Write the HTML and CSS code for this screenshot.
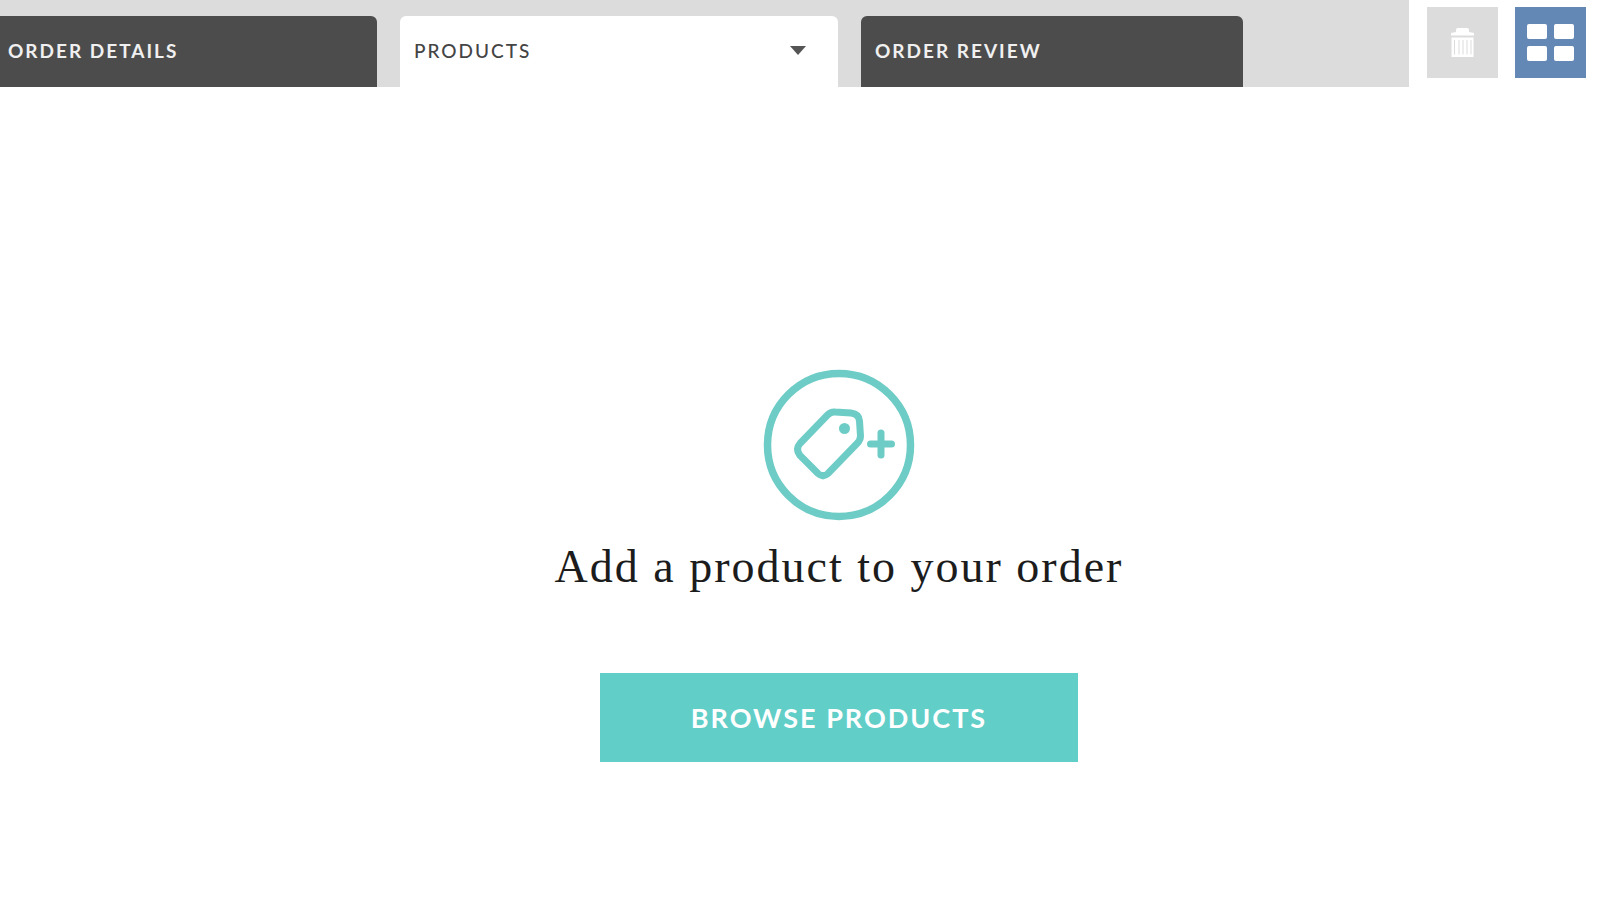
FILE: index.html
```html
<!DOCTYPE html>
<html lang="en">
<head>
  <meta charset="UTF-8" />
  <meta name="viewport" content="width=device-width, initial-scale=1.0"/>
  <title>Order - Products</title>
  <link rel="stylesheet" href="styles.css">
</head>
<body>

<header class="topbar">
  <nav class="tabs">
    <button type="button" class="tab tab-first">ORDER DETAILS</button>
    <button type="button" class="tab active" aria-haspopup="true">
      PRODUCTS
      <svg class="caret" viewBox="0 0 16 10" aria-hidden="true"><path d="M0 0h16L8 9z"/></svg>
    </button>
    <button type="button" class="tab">ORDER REVIEW</button>
  </nav>
  <div class="tools">
    <button type="button" class="tool delete-btn" aria-label="Delete">
      <svg viewBox="0 0 71 71" aria-hidden="true">
        <path d="M24 28.500v-2.500l5-1v-2.500q0-1.500 2-1.500h9q2 0 2 1.500v2.500l5 1v2.500z"/>
        <path fill-rule="evenodd" d="M24.500 30.500h22V50h-22zM27 33v14.500h1V33zM31.500 33v14.500h1V33zM35.500 33v14.500h1V33zM39.500 33v14.500h1V33zM43.500 33v14.500h1V33z"/>
      </svg>
    </button>
    <button type="button" class="tool grid-btn" aria-label="Grid view">
      <svg viewBox="0 0 71 71" aria-hidden="true">
        <rect x="12" y="17" width="20" height="15" rx="2"/>
        <rect x="39" y="17" width="20" height="15" rx="2"/>
        <rect x="12" y="39" width="20" height="15" rx="2"/>
        <rect x="39" y="39" width="20" height="15" rx="2"/>
      </svg>
    </button>
  </div>
</header>

<main class="empty">
  <svg class="tag-icon" viewBox="0 0 152 152" aria-hidden="true">
    <circle cx="76" cy="76" r="71.500" stroke-width="7.500"/>
    <path stroke-width="7" d="M72 43L88 44Q96 45 96.500 52L97.500 67Q97.500 71 94 74.500L65 104.500Q60 109 55 104.500L37 86.500Q32 80 37 74.500L64.500 46Q68 42.500 72 43Z"/>
    <path stroke-width="7" stroke-linecap="round" d="M118 64v22M107.500 75h21"/>
    <circle class="dot" cx="81.500" cy="59.500" r="5.500"/>
  </svg>
  <h1>Add a product to your order</h1>
  <button type="button" class="browse-btn">BROWSE PRODUCTS</button>
</main>

</body>
</html>
```
FILE: styles.css
```css
* {
  box-sizing: border-box;
}

body {
  font-family: Lato, 'Open Sans', sans-serif;
  background: #fff;
  margin: 0;
}

button {
  border: none;
  padding: 0;
  font-family: inherit;
  cursor: pointer;
}

.topbar {
  display: flex;
  align-items: flex-start;
}

.tabs {
  flex: 1;
  display: grid;
  grid-template-columns: 377fr 438fr 382fr 143fr;
  gap: 23px;
  padding-top: 16px;
  background: #dcdcdc;
}

.tab {
  display: flex;
  align-items: center;
  justify-content: space-between;
  height: 71px;
  padding: 0 32px 2px 14px;
  background: #4c4c4c;
  color: #f0f0f0;
  border-radius: 6px 6px 0 0;
  font-size: 19px;
  font-weight: 700;
  letter-spacing: 2px;
}

.tab-first {
  padding-left: 8px;
  border-top-left-radius: 0;
}

.tab.active {
  background: #fff;
  color: #444;
  font-weight: 500;
}

.caret {
  width: 16px;
  height: 10px;
  fill: #555;
}

.tools {
  display: flex;
  gap: 17px;
  padding: 7px 14px 0 18px;
}

.tool {
  width: 71px;
  height: 71px;
}

.tool svg {
  display: block;
  fill: #fff;
}

.delete-btn {
  background: #dcdcdc;
}

.grid-btn {
  background: #6488b6;
}

.empty {
  display: flex;
  flex-direction: column;
  align-items: center;
  padding: 282px 0 40px 78px;
}

.tag-icon {
  width: 152px;
  height: 152px;
  fill: none;
  stroke: #6eccc6;
}

.tag-icon .dot {
  fill: #6eccc6;
  stroke: none;
}

h1 {
  margin: 16px 0 76px;
  font-family: 'Liberation Serif', serif;
  font-size: 46px;
  font-weight: 400;
  line-height: 60px;
  letter-spacing: 2px;
  color: #1c1c1c;
}

.browse-btn {
  padding: 0 85px;
  min-width: 478px;
  height: 89px;
  background: #61cec8;
  color: #fff;
  font-size: 27px;
  font-weight: 700;
  letter-spacing: 2px;
}
```
